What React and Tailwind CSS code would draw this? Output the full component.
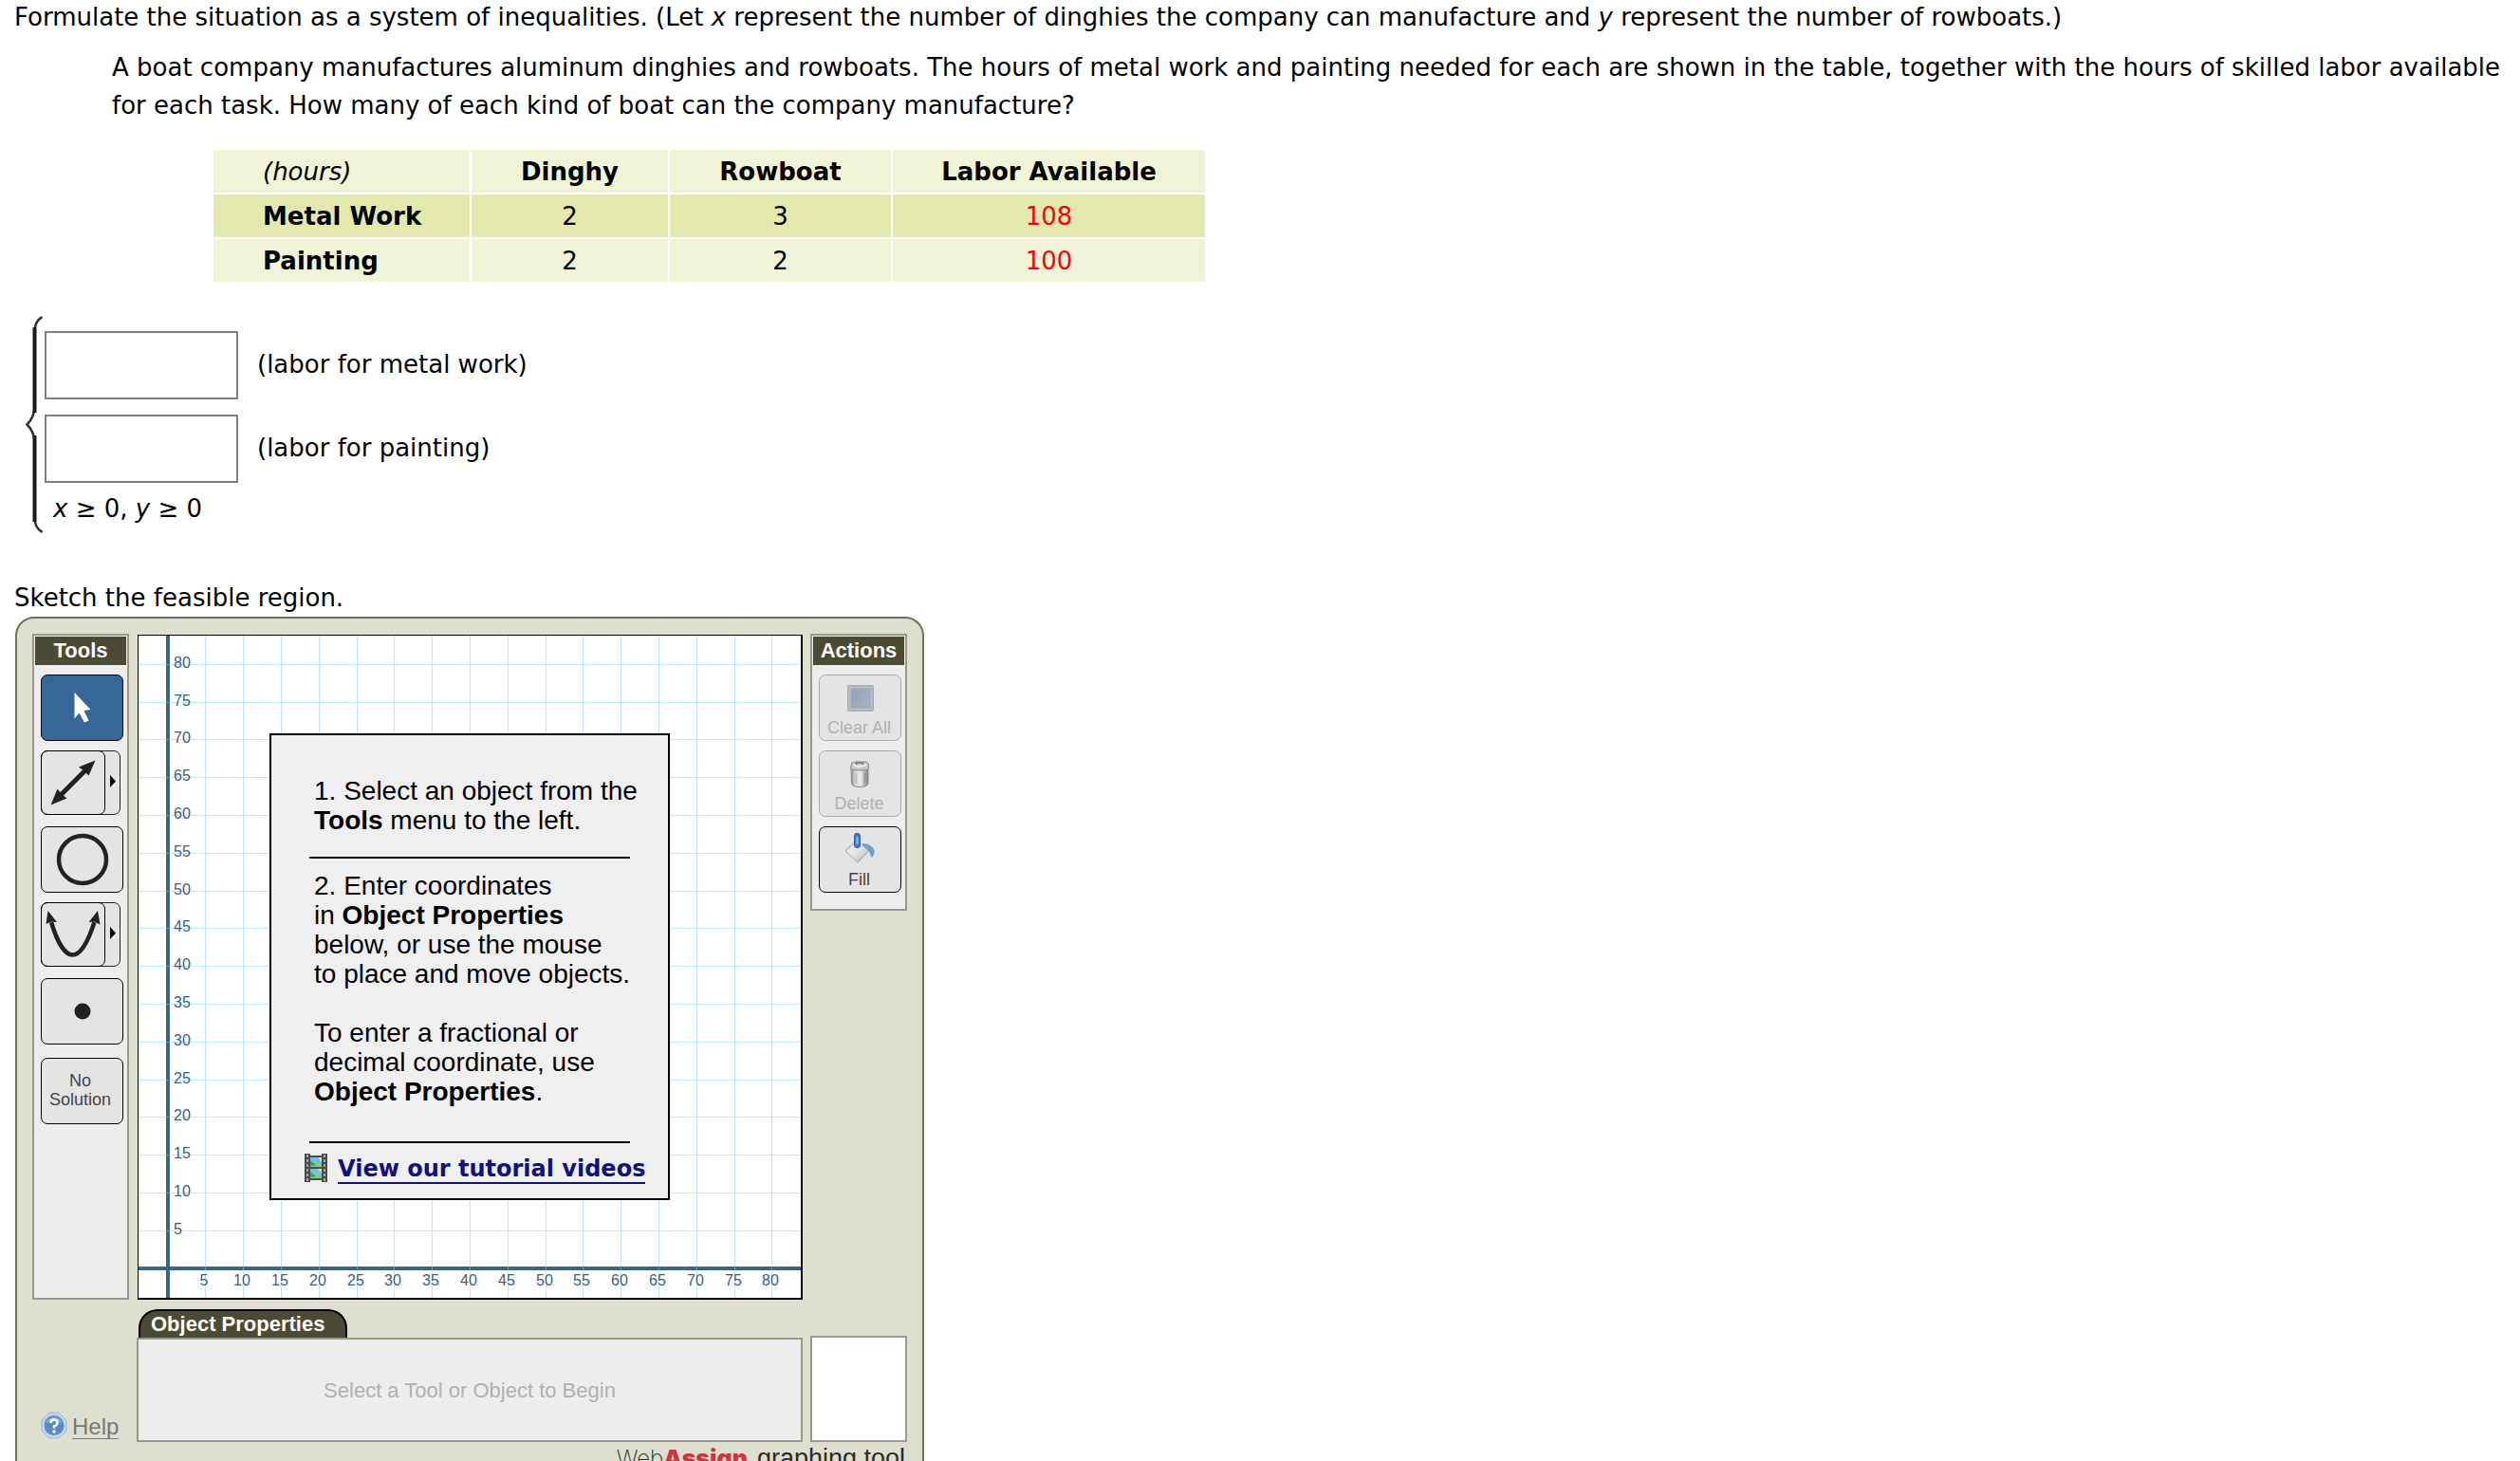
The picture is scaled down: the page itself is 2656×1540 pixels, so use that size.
import React, { useState } from "react";

// Grid geometry of the graph, in svg units
const ORIGIN_X = 31;
const ORIGIN_Y = 667;
const STEP = 39.8;
const TICKS = Array.from({ length: 16 }, (_, i) => i + 1);

const tableRows = [
  { label: "Metal Work", dinghy: 2, rowboat: 3, labor: 108, shade: "bg-[#e3e9ad]" },
  { label: "Painting", dinghy: 2, rowboat: 2, labor: 100, shade: "bg-[#f0f3d5]" },
];

const HoursTable = () => (
  <table className="ml-[223px] mt-[25px] border-separate border-spacing-[2px] text-center leading-[43px] [&_td]:pt-[2px] [&_th]:pt-[2px]">
    <thead>
      <tr className="bg-[#f0f3d5]">
        <th className="w-[270px] pl-[52px] text-left font-normal italic">(hours)</th>
        <th className="w-[207px]">Dinghy</th>
        <th className="w-[233px]">Rowboat</th>
        <th className="w-[329px]">Labor Available</th>
      </tr>
    </thead>
    <tbody>
      {tableRows.map((row) => (
        <tr key={row.label} className={row.shade}>
          <th className="pl-[52px] text-left">{row.label}</th>
          <td>{row.dinghy}</td>
          <td>{row.rowboat}</td>
          <td className="text-[#ff0000]">{row.labor}</td>
        </tr>
      ))}
    </tbody>
  </table>
);

const InequalityInput = ({ id, label }) => {
  const [value, setValue] = useState("");
  return (
    <div className="flex items-center gap-5">
      <input
        id={id}
        type="text"
        value={value}
        onChange={(e) => setValue(e.target.value)}
        className="h-[72px] w-[204px] border-2 border-[#808080] bg-white px-2"
      />
      <label htmlFor={id} className="pb-[2px]">
        {label}
      </label>
    </div>
  );
};

const InequalitySystem = () => (
  <div className="mt-[34px] flex gap-[2px] pl-[27px]">
    <svg width="18" height="229" viewBox="0 0 18 229" fill="none" aria-hidden="true">
      <path
        d="M17.5 1C12 4 9.500 9 9.500 17V95C9.500 104 7 109 1.500 114.500C7 120 9.500 126 9.500 134V212C9.500 220 12 225 17.500 228"
        stroke="#333"
        strokeWidth="2.500"
      />
      <path d="M9.500 12V102M9.500 126V217" stroke="#1a1a1a" strokeWidth="4" />
    </svg>
    <div className="flex flex-col gap-4 pt-4">
      <InequalityInput id="metal" label="(labor for metal work)" />
      <InequalityInput id="painting" label="(labor for painting)" />
      <p className="-mt-2 pl-[9px] leading-[38px]">
        <i>x</i> ≥ 0, <i>y</i> ≥ 0
      </p>
    </div>
  </div>
);

const ToolButton = ({ label, selected, children }) => (
  <button
    type="button"
    aria-label={label}
    className={
      selected
        ? "flex h-[70px] w-[87px] items-center justify-center rounded-[7px] border border-black bg-[#376797]"
        : "flex h-[70px] w-[87px] items-center justify-center rounded-[7px] border border-black bg-[#e4e4e4]"
    }
  >
    {children}
  </button>
);

// Button with a small flyout handle on its right side
const SplitToolButton = ({ label, children }) => (
  <div className="mb-[2px] flex h-[68px] w-[84px] rounded-[7px] border border-[#222] bg-[#e4e4e4]">
    <button
      type="button"
      aria-label={label}
      className="-my-px -ml-px flex w-[68px] items-center justify-center rounded-[7px] border border-black"
    >
      {children}
    </button>
    <button type="button" aria-label={`More ${label}`} className="flex flex-1 items-center justify-center pb-1">
      <svg width="6" height="13" viewBox="0 0 6 13">
        <path d="M0 0L6 6.500L0 13Z" fill="#000" />
      </svg>
    </button>
  </div>
);

const PanelTitle = ({ children }) => (
  <h3 className="m-px bg-[#4a4a35] text-center text-[22px] font-bold leading-[30px] text-white">{children}</h3>
);

const ToolsPanel = () => (
  <div className="border-2 border-[#9a9a8a] bg-[#ededed]">
    <PanelTitle>Tools</PanelTitle>
    <div className="flex flex-col gap-[10px] pl-[7px] pt-[9px]">
      <ToolButton label="Select" selected>
        <svg width="18" height="32" viewBox="0 0 18 32">
          <path d="M0.500 0V27.500L5.500 21.500L11 31.500L15.500 29.500L10.500 19L17.500 18Z" fill="#fff" />
        </svg>
      </ToolButton>
      <SplitToolButton label="Line">
        <svg width="48" height="48" viewBox="0 0 48 48" fill="#222">
          <path d="M10 38L38 10" stroke="#222" strokeWidth="5" />
          <path d="M47.500 0.500L40.500 16.500L36 12L30 7.500Z" />
          <path d="M0.500 47.500L7.500 30.500L12 36L17.500 40.500Z" />
        </svg>
      </SplitToolButton>
      <ToolButton label="Circle">
        <svg width="56" height="56" viewBox="0 0 56 56" fill="none">
          <circle cx="28" cy="28" r="25" stroke="#222" strokeWidth="4.500" />
        </svg>
      </ToolButton>
      <SplitToolButton label="Parabola">
        <svg width="58" height="50" viewBox="0 0 58 50" fill="#222">
          <path d="M6 12C12 32 20 46.500 28.500 46.500S45 32 51.500 12" fill="none" stroke="#222" strokeWidth="4.500" />
          <path d="M2.500 0L12 12L6 11.500L0.500 14Z" />
          <path d="M55 0L45.500 12L51.500 11.500L57.500 14.500Z" />
        </svg>
      </SplitToolButton>
      <ToolButton label="Point">
        <svg width="18" height="18" viewBox="0 0 18 18">
          <circle cx="9" cy="9" r="8.500" fill="#222" />
        </svg>
      </ToolButton>
      <div className="pt-1 text-[18px] leading-5 text-[#444]">
        <ToolButton label="No Solution">
          <span className="pb-[2px] pr-1">
            No
            <br />
            Solution
          </span>
        </ToolButton>
      </div>
    </div>
  </div>
);

const ActionButton = ({ label, disabled, icon }) => (
  <button
    type="button"
    disabled={disabled}
    className="flex h-[70px] w-[87px] flex-col items-center gap-[7px] rounded-[7px] border border-black bg-[#e4e4e4] pr-[2px] pt-[6px] text-[18px] leading-5 text-[#444] disabled:border-[#a8a8a8] disabled:text-[#b0b0b0]"
  >
    {icon}
    <span>{label}</span>
  </button>
);

const ClearIcon = () => (
  <svg width="32" height="32" viewBox="0 0 32 32" className="shrink-0">
    <defs>
      <linearGradient id="clearFill" x1="0" y1="0" x2="1" y2="1">
        <stop offset="0%" stopColor="#93a2b8" />
        <stop offset="100%" stopColor="#a9b3c4" />
      </linearGradient>
    </defs>
    <rect x="3" y="4" width="28" height="28" rx="2" fill="#a9afb8" />
    <rect x="5.500" y="6.500" width="23" height="23" fill="none" stroke="#bcbec1" strokeWidth="2" />
    <rect x="7.500" y="8.500" width="19" height="19" fill="url(#clearFill)" stroke="#9ba4b2" />
  </svg>
);

const DeleteIcon = () => (
  <svg width="32" height="32" viewBox="0 0 32 32" className="shrink-0">
    <defs>
      <linearGradient id="canFill">
        <stop offset="0%" stopColor="#8b8b8b" />
        <stop offset="25%" stopColor="#d5d5d5" />
        <stop offset="55%" stopColor="#ededed" />
        <stop offset="100%" stopColor="#828282" />
      </linearGradient>
    </defs>
    <path d="M7 10H25V28Q24 31.500 16 31.500Q8 31.500 7.500 28Z" fill="url(#canFill)" stroke="#8a8a8a" />
    <path d="M7 9Q7 5 11 5H21Q25.500 5 25.500 9V12Q25 14 16 14Q7 14 6.500 12Z" fill="#c8c8c8" stroke="#8a8a8a" />
    <path d="M9 8Q16 12 23 8" fill="none" stroke="#f2f2f2" strokeWidth="2" />
    <path d="M12.500 8V6H19.500V8" fill="none" stroke="#777" strokeWidth="1.500" />
    <path d="M12.500 17V28" stroke="#bbb" strokeWidth="1.500" />
    <path d="M21.500 17V28" stroke="#999" strokeWidth="2" />
  </svg>
);

const FillIcon = () => (
  <svg width="34" height="32" viewBox="0 0 34 32" className="shrink-0">
    <defs>
      <linearGradient id="bucket" x1="0" y1="0" x2="1" y2="1">
        <stop offset="0%" stopColor="#ffffff" />
        <stop offset="60%" stopColor="#dcdcdc" />
        <stop offset="100%" stopColor="#a2a2a2" />
      </linearGradient>
    </defs>
    <path d="M20 11Q30 11 32.500 19Q33 23 29.500 26Q28 22 27 19L22 17Z" fill="#6ba1cf" />
    <path d="M14 8L27 19L15 31L2 19Z" fill="url(#bucket)" stroke="#a5a5a5" />
    <path d="M2 19L14 8" stroke="#c2c2c2" strokeWidth="2" />
    <rect x="11.500" y="0.500" width="6" height="15" rx="2.500" fill="#3f7fc4" stroke="#2d62a5" />
    <path d="M14.500 4V12" stroke="#8ab8e6" strokeWidth="2" />
  </svg>
);

const ActionsPanel = () => (
  <div className="h-[292px] border-2 border-[#9a9a8a] bg-[#ededed]">
    <PanelTitle>Actions</PanelTitle>
    <div className="flex flex-col gap-[10px] pl-[7px] pt-[9px]">
      <ActionButton label="Clear All" disabled icon={<ClearIcon />} />
      <ActionButton label="Delete" disabled icon={<DeleteIcon />} />
      <ActionButton label="Fill" icon={<FillIcon />} />
    </div>
  </div>
);

const Graph = () => (
  <svg width="698" height="698" viewBox="0 0 698 698" className="block">
    <path d={`M${ORIGIN_X} 0V698M0 ${ORIGIN_Y}H698`} stroke="#3a6480" strokeWidth="4" />
    <g stroke="#80d4f8" strokeOpacity="0.5">
      {TICKS.map((t) => {
        const x = Math.floor(ORIGIN_X + STEP * t) + 0.5;
        const y = Math.floor(ORIGIN_Y - STEP * t) + 0.5;
        return <path key={t} d={`M${x} 0V698M0 ${y}H698`} />;
      })}
    </g>
    <g fill="#3a6080" fontSize="16">
      {TICKS.map((t) => (
        <text key={t} x={Math.floor(ORIGIN_X + STEP * t) - 1} y="685" textAnchor="middle">
          {t * 5}
        </text>
      ))}
      {TICKS.map((t) => (
        <text key={t} x="37" y={Math.floor(ORIGIN_Y - STEP * t) + 4}>
          {t * 5}
        </text>
      ))}
    </g>
  </svg>
);

const FilmIcon = () => (
  <svg width="24" height="30" viewBox="0 0 24 30" className="shrink-0">
    <rect width="24" height="30" fill="#4a4a4a" />
    <rect x="6" y="4" width="12" height="10" fill="#6fc0f0" />
    <rect x="6" y="16" width="12" height="10" fill="#6fc0f0" />
    <path d="M6 7Q12 11 18 12V14H6ZM6 19Q12 23 18 24V26H6Z" fill="#7fd460" />
    <path d="M6 7L12 12L6 13ZM6 19L12 24L6 25Z" fill="#2fa35c" />
    <path d="M14 4H18V9ZM14 16H18V21Z" fill="#f3dc8c" />
    <path d="M6 0H18V2H6ZM6 28H18V30H6Z" fill="#ededed" />
    <path d="M3 1V30M21 1V30" stroke="#a5a5a5" strokeWidth="2" strokeDasharray="3 2" />
  </svg>
);

const Instructions = () => (
  <div className="absolute left-[138px] top-[103px] h-[492px] w-[422px] border-2 border-black bg-[#efefef] px-10 pt-[43px] text-[28px] leading-[31px] text-black">
    <p className="whitespace-nowrap pl-[5px]">
      1. Select an object from the
      <br />
      <b>Tools</b> menu to the left.
    </p>
    <hr className="mt-[23px] border-t-2 border-black" />
    <p className="mt-[13px] whitespace-nowrap pl-[5px]">
      2. Enter coordinates
      <br />
      in <b>Object Properties</b>
      <br />
      below, or use the mouse
      <br />
      to place and move objects.
    </p>
    <p className="mt-[31px] whitespace-nowrap pl-[5px]">
      To enter a fractional or
      <br />
      decimal coordinate, use
      <br />
      <b>Object Properties</b>.
    </p>
    <hr className="mt-[37px] border-t-2 border-black" />
    <div className="-ml-[5px] mt-[11px] flex items-start gap-[11px]">
      <FilmIcon />
      <a
        href="#tutorials"
        className="whitespace-nowrap border-b-2 border-[#10107f] pt-[2px] font-['DejaVu_Sans',sans-serif] text-[24px] font-bold leading-7 text-[#10107f]"
      >
        View our tutorial videos
      </a>
    </div>
  </div>
);

const HelpLink = () => (
  <div className="flex items-end gap-[5px] self-end pb-[3px] pl-[9px]">
    <svg width="28" height="29" viewBox="0 0 28 29">
      <path d="M9 1H19L27 9V20L19 28H9L1 20V9Z" fill="#c3d5ea" stroke="#9db7d6" />
      <circle cx="14" cy="14.500" r="10.500" fill="#5b8cc0" />
      <path d="M5 12A10 10 0 0 1 23 12Q14 8 5 12Z" fill="#8db0d8" />
      <path d="M10.500 12Q10.500 8.500 14 8.500T17.500 12Q17.500 14 14 15.500V17.500" fill="none" stroke="#fff" strokeWidth="2.500" />
      <circle cx="14" cy="21" r="1.700" fill="#fff" />
    </svg>
    <a href="#help" className="border-b border-[#777] text-[24px] leading-6 text-[#777]">
      Help
    </a>
  </div>
);

const GraphingTool = () => (
  <section className="ml-4 mt-[2px] w-fit rounded-[20px] border-2 border-[#72725c] bg-[#dedfcf] p-4 font-['Liberation_Sans',Arial,sans-serif]">
    <div className="grid grid-cols-[102px_702px_102px] gap-x-2">
      <ToolsPanel />
      <div className="relative ml-px mt-px border-b-2 border-l border-r-2 border-t border-black bg-white">
        <Graph />
        <Instructions />
      </div>
      <ActionsPanel />
    </div>
    <div className="mt-[10px] grid grid-cols-[102px_702px_102px] gap-x-2">
      <HelpLink />
      <div>
        <h3 className="ml-[2px] h-[30px] w-[220px] rounded-t-[20px] border-2 border-b-0 border-black bg-[#4a4a35] pl-[11px] text-[22px] font-bold leading-[27px] text-white">
          Object Properties
        </h3>
        <div className="flex h-[110px] items-center justify-center border-2 border-[#9a9a8a] bg-[#ededed] text-[22px] text-[#b0b0b0]">
          Select a Tool or Object to Begin
        </div>
      </div>
      <div className="h-[112px] self-end border-2 border-[#9a9a8a] bg-white" />
    </div>
    <p className="mt-1 flex items-baseline justify-end pr-[2px] text-[27px] leading-[26px] text-[#2b2b2b]">
      <span className="font-['Inter',sans-serif] text-[24px] font-extralight">Web</span>
      <span className="mr-[10px] font-['Inter',sans-serif] text-[25px] font-black text-[#cf3540]">Assign</span>
      graphing tool
    </p>
  </section>
);

function App() {
  return (
    <main className="h-screen overflow-hidden bg-white font-['DejaVu_Sans',Verdana,sans-serif] text-[26px] text-black">
      <p className="pl-[15px] leading-9">
        Formulate the situation as a system of inequalities. (Let <i>x</i> represent the number of dinghies the company
        can manufacture and <i>y</i> represent the number of rowboats.)
      </p>
      <p className="mt-[15px] pl-[118px] leading-10">
        A boat company manufactures aluminum dinghies and rowboats. The hours of metal work and painting needed for each
        are shown in the table, together with the hours of skilled labor available for each task. How many of each kind
        of boat can the company manufacture?
      </p>
      <HoursTable />
      <InequalitySystem />
      <p className="mt-[50px] pl-[15px] leading-9">Sketch the feasible region.</p>
      <GraphingTool />
    </main>
  );
}

export default App;
